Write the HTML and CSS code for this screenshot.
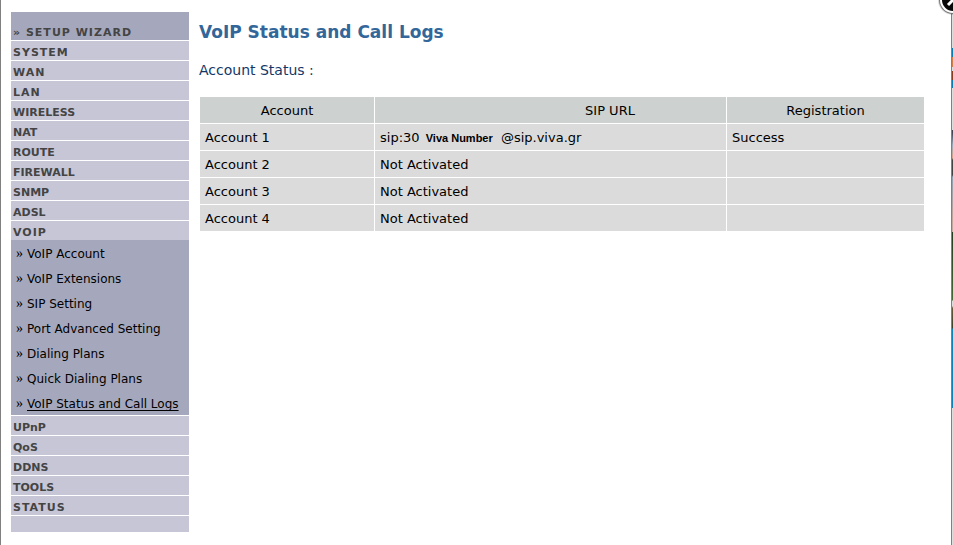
FILE: index.html
```html
<!DOCTYPE html>
<html lang="en">
<head>
<meta charset="utf-8">
<title>VoIP Status and Call Logs</title>
<link rel="stylesheet" href="styles.css">
</head>
<body>
<div class="frame">
  <nav class="menu">
    <a class="item wizard spaced" href="#">» SETUP WIZARD</a>
    <a class="item spaced" href="#">SYSTEM</a>
    <a class="item spaced" href="#">WAN</a>
    <a class="item spaced" href="#">LAN</a>
    <a class="item" href="#">WIRELESS</a>
    <a class="item" href="#">NAT</a>
    <a class="item" href="#">ROUTE</a>
    <a class="item" href="#">FIREWALL</a>
    <a class="item" href="#">SNMP</a>
    <a class="item" href="#">ADSL</a>
    <a class="item open spaced" href="#">VOIP</a>
    <ul class="submenu">
      <li><a href="#">VoIP Account</a></li>
      <li><a href="#">VoIP Extensions</a></li>
      <li><a href="#">SIP Setting</a></li>
      <li><a href="#">Port Advanced Setting</a></li>
      <li><a href="#">Dialing Plans</a></li>
      <li><a href="#">Quick Dialing Plans</a></li>
      <li><a class="current" href="#">VoIP Status and Call Logs</a></li>
    </ul>
    <a class="item" href="#">UPnP</a>
    <a class="item" href="#">QoS</a>
    <a class="item" href="#">DDNS</a>
    <a class="item" href="#">TOOLS</a>
    <a class="item spaced" href="#">STATUS</a>
    <div class="menu-end"></div>
  </nav>
  <main class="content">
    <h1>VoIP Status and Call Logs</h1>
    <h2>Account Status :</h2>
    <table class="accounts">
      <thead>
        <tr><th class="col-account">Account</th><th class="col-url">SIP URL</th><th class="col-reg">Registration</th></tr>
      </thead>
      <tbody>
        <tr><td>Account 1</td><td>sip:30 <b class="number">Viva Number</b> @sip.viva.gr</td><td>Success</td></tr>
        <tr><td>Account 2</td><td>Not Activated</td><td></td></tr>
        <tr><td>Account 3</td><td>Not Activated</td><td></td></tr>
        <tr><td>Account 4</td><td>Not Activated</td><td></td></tr>
      </tbody>
    </table>
  </main>
</div>
<div class="backdrop"></div>
<button class="close" type="button" aria-label="Close">
  <svg viewBox="0 0 32 32" width="32" height="32">
    <circle cx="16" cy="16" r="15" fill="#000" opacity=".15"/>
    <circle cx="16" cy="16" r="14" fill="#777"/>
    <circle cx="16" cy="16" r="13" fill="#fff"/>
    <circle cx="16" cy="16" r="11" fill="#080808"/>
    <path d="M11 21L16 16L21 21M16 16L11 11M16 16L21 11" stroke="#fff" stroke-width="3" fill="none"/>
  </svg>
</button>
</body>
</html>
```
FILE: styles.css
```css
* {
  box-sizing: border-box;
}

body {
  margin: 0;
  min-height: 100vh;
  display: flex;
  position: relative;
  overflow: hidden;
  background: #fff;
  font-family: Verdana, "DejaVu Sans", sans-serif;
  font-size: 13px;
  color: #000;
}

.frame {
  flex: 1;
  display: flex;
  align-items: flex-start;
  gap: 10px;
  padding: 12px 26px 12px 10px;
  border-left: 1px solid #808080;
  border-right: 1px solid #808080;
}

.menu {
  flex: 0 0 178px;
  background: #c6c6d6;
}

.item {
  display: block;
  height: 20px;
  padding: 2px 2px 0;
  border-bottom: 1px solid #fff;
  font-size: 11px;
  line-height: 20px;
  font-weight: bold;
  color: #444;
  text-decoration: none;
}

.spaced {
  letter-spacing: 1px;
}

.wizard {
  height: 29px;
  padding-top: 11px;
  background: #a5a8bd;
}

.open {
  height: 19px;
  border-bottom: 0;
}

.submenu {
  margin: 0;
  padding: 0;
  list-style: none;
  background: #a5a8bd;
  border-bottom: 1px solid #fff;
}

.submenu li {
  display: flex;
  gap: 4px;
  padding: 0 5px;
  height: 25px;
  font-size: 12px;
  line-height: 28px;
  white-space: nowrap;
}

.submenu li::before {
  content: "»";
  font-family: "Liberation Serif", serif;
  font-size: 14px;
}

.submenu a {
  color: #000;
  text-decoration: none;
}

.submenu .current {
  text-decoration: underline;
  text-underline-offset: 2px;
}

.menu-end {
  height: 16px;
}

.content {
  flex: 1;
}

h1 {
  margin: 10px 0 20px;
  font-size: 17px;
  line-height: 20px;
  color: #336699;
}

h2 {
  margin: 0 0 18px;
  font-size: 14px;
  line-height: 16px;
  font-weight: normal;
  color: #123768;
}

h1,
h2 {
  white-space: nowrap;
}

.accounts {
  width: 100%;
  table-layout: fixed;
  border-collapse: separate;
  border-spacing: 1px;
}

.accounts th,
.accounts td {
  height: 26px;
  padding: 2px 5px 0;
  line-height: 18px;
  text-align: left;
  white-space: nowrap;
  background: #dbdbdb;
}

.accounts th {
  font-weight: normal;
  text-align: center;
  background: #cdd1cf;
}

.accounts .col-account {
  width: 174px;
}

.accounts .col-url {
  padding-left: 124px;
}

.accounts .col-reg {
  width: 197px;
}

.number {
  margin: 0 4px 0 2px;
  font-family: "Liberation Sans", Arial, sans-serif;
  font-size: 11px;
}

.backdrop {
  flex: 0 0 1px;
  background: linear-gradient(#ddd 48px, #087cb5 48px 57px, #d77b48 57px 67px, #ddd 67px 71px, #8c3c20 71px 80px, #087cb5 80px 88px, #ddd 88px 130px, #445 130px 133px, #9ab 145px, #d9a38c 158px, #444 160px 175px, #8fa0b0 177px, #c5a39a 220px, #c5a8a0 232px, #263c20 232px, #466b35 300px, #ddd 301px 306px, #6b593a 308px, #3a4228 328px, #0985bc 329px 408px, #ddd 408px);
}

.close {
  position: absolute;
  top: -16px;
  right: -16px;
  width: 32px;
  height: 32px;
  padding: 0;
  border: 0;
  background: none;
}

.close svg {
  display: block;
}
```
